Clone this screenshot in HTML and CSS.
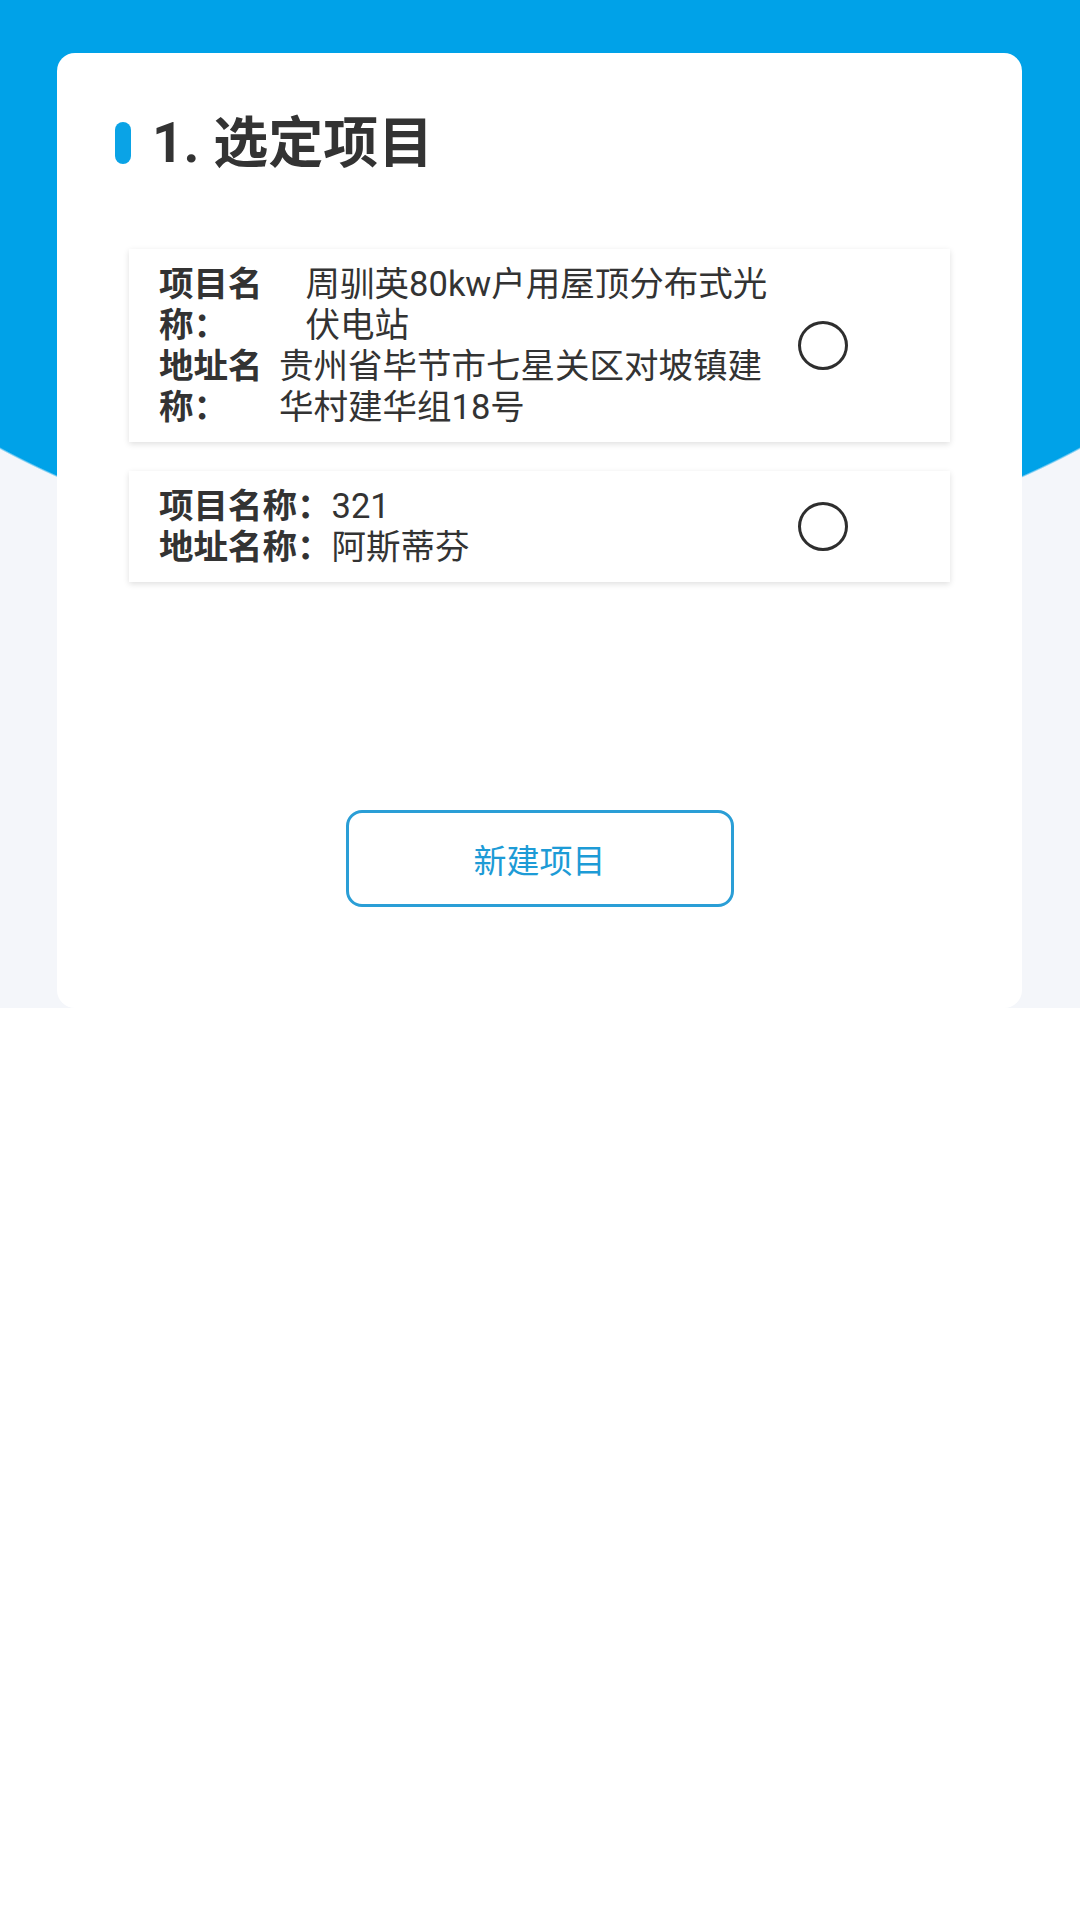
FILE: index.html
```html
<!DOCTYPE html>
<html lang="zh-CN">
<head>
<meta charset="utf-8">
<title>选定项目</title>
<link rel="stylesheet" href="styles.css">
</head>
<body>
<div class="page">
  <div class="panel">
    <div class="title-row">
      <span class="title-bar"></span>
      <h1 class="title">1. 选定项目</h1>
    </div>
    <div class="list">
      <div class="item">
        <div class="info">
          <div class="row"><span class="label">项目名称：</span><span class="value">周驯英80kw户用屋顶分布式光伏电站</span></div>
          <div class="row"><span class="label">地址名称：</span><span class="value">贵州省毕节市七星关区对坡镇建华村建华组18号</span></div>
        </div>
        <span class="radio"></span>
      </div>
      <div class="item">
        <div class="info">
          <div class="row"><span class="label">项目名称：</span><span class="value">321</span></div>
          <div class="row"><span class="label">地址名称：</span><span class="value">阿斯蒂芬</span></div>
        </div>
        <span class="radio"></span>
      </div>
    </div>
    <div class="actions">
      <button class="btn-new" type="button">新建项目</button>
    </div>
  </div>
</div>
</body>
</html>
```

FILE: styles.css
```css
* { box-sizing: border-box; }
html, body { margin: 0; padding: 0; background: #ffffff; }
body {
  font-family: Roboto, "Noto Sans CJK SC", sans-serif;
  color: #333333;
}
.page {
  height: 1008px;
  padding: 53px 58px 0 57px;
  background:
    radial-gradient(ellipse 800px 471px at 540px 102px, #00a2e8 99.6%, rgba(0,162,232,0) 100%),
    #f4f6fa;
}
.panel {
  height: 955px;
  background: #ffffff;
  border-radius: 18px;
  padding-top: 62px;
}
.title-row {
  display: flex;
  align-items: center;
  height: 56px;
  padding-left: 58px;
}
.title-bar {
  width: 16px;
  height: 42px;
  border-radius: 8px;
  background: #0aa3e6;
  margin-right: 21px;
}
.title {
  margin: 0;
  font-size: 55px;
  line-height: 56px;
  font-weight: 700;
  color: #333333;
}
.list {
  margin: 78px 72px 0 72px;
  display: flex;
  flex-direction: column;
  gap: 29px;
}
.item {
  display: flex;
  align-items: center;
  background: #ffffff;
  padding: 14.5px 102px 14.5px 30px;
  box-shadow: 0 2px 6px rgba(0,0,0,0.13);
}
.info {
  flex: 1;
  min-width: 0;
  margin-right: 12px;
  font-size: 34.5px;
  line-height: 41px;
}
.row {
  display: flex;
}
.label {
  font-weight: 700;
}
.value {
  font-weight: 400;
}
.radio {
  flex: none;
  width: 50px;
  height: 49px;
  border: 3.5px solid #2e2e2e;
  border-radius: 50%;
}
.actions {
  display: flex;
  justify-content: center;
  margin-top: 228px;
}
.btn-new {
  width: 388px;
  height: 97px;
  border: 3px solid #2a9ed6;
  border-radius: 16px;
  background: #ffffff;
  color: #1d9bd6;
  font-family: Roboto, "Noto Sans CJK SC", sans-serif;
  font-size: 33px;
  padding: 0;
}
```
